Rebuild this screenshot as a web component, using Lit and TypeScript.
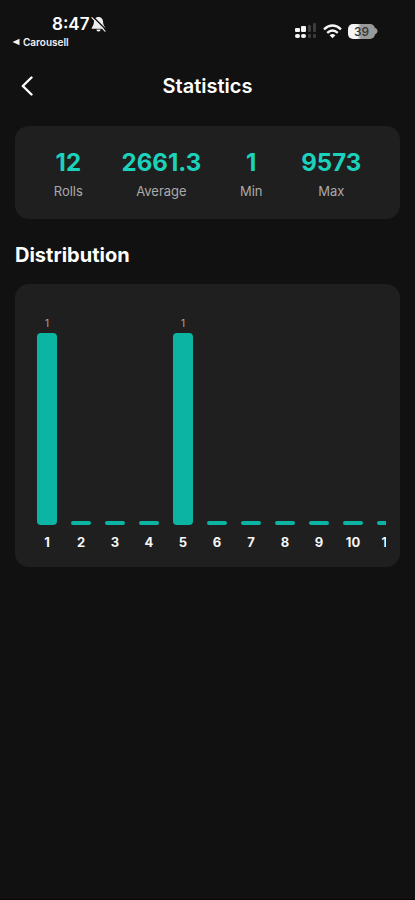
import { LitElement, html, css } from "lit";
import { customElement, property } from "lit/decorators.js";

@customElement("status-bar")
class StatusBar extends LitElement {
  static styles = css`
    :host { display: flex; justify-content: space-between; height: 60px; color: #fff; }
    .left { display: flex; flex-direction: column; padding: 14px 0 0 12px; }
    .clock { display: flex; align-items: center; gap: 2px; margin-left: 40px; font-size: 17px; line-height: 20px; font-weight: 600; }
    .back-app { display: flex; align-items: center; gap: 3px; font-size: 10px; line-height: 16px; font-weight: 600; color: #f2f2f2; text-decoration: none; }
    .right { display: flex; align-items: center; gap: 6px; height: 18px; padding: 22px 37px 0 0; }
    svg { display: block; }
    .battery { display: flex; align-items: center; }
    .level { width: 27px; height: 15px; border-radius: 5px; background: linear-gradient(90deg, #f5f5f5 34%, #999 48%); color: #333; font-size: 12px; line-height: 15px; font-weight: 500; text-align: center; }
  `;
  render() {
    return html`
      <div class="left">
        <div class="clock">8:47
          <svg width="15" height="17" viewBox="0 0 15 17" aria-label="Silent">
            <path d="M7.5 1C4.2 1 2.9 3.6 2.9 6.4C2.9 9.6 0.6 10.6 0.6 12.8H14.4C14.4 10.6 12.1 9.6 12.1 6.4C12.1 3.6 10.8 1 7.5 1ZM5.4 13.6C5.6 15 6.5 15.6 7.5 15.6C8.5 15.6 9.4 15 9.6 13.6Z" fill="#eee"/>
            <path d="M2 0.8L15 13.8" stroke="#111" stroke-width="1.4"/>
            <path d="M0.9 1.7L14 15.2" stroke="#eee" stroke-width="1.2" stroke-linecap="round"/>
          </svg>
        </div>
        <a class="back-app" href="#carousell">
          <svg width="8" height="8" viewBox="0 0 8 8"><path d="M0.5 4L7.5 0.8V7.2Z" fill="#f2f2f2"/></svg>Carousell
        </a>
      </div>
      <div class="right">
        <svg width="22" height="16" viewBox="0 0 22 16" aria-label="Signal">
          <g fill="#f5f5f5">
            <rect x="0" y="5" width="5" height="4" rx="1"/><rect x="6" y="3" width="5" height="6" rx="1"/>
            <rect x="0" y="11" width="5" height="4" rx="2"/><rect x="6" y="11" width="5" height="4" rx="2"/>
          </g>
          <g fill="#3c3c3c">
            <rect x="13" y="2" width="3" height="7" rx="1"/><rect x="18" y="0" width="3" height="9" rx="1"/>
            <rect x="13" y="11" width="3" height="4" rx="1"/><rect x="18" y="11" width="3" height="4" rx="1"/>
          </g>
        </svg>
        <svg width="19" height="15" viewBox="0 0 19 15" aria-label="Wi-Fi">
          <g fill="none" stroke="#f5f5f5" stroke-width="2.4">
            <path d="M1 5.4Q9.5 -2.2 18 5.4"/><path d="M4.2 8.8Q9.5 4 14.8 8.8"/>
          </g>
          <path d="M6.6 11.2Q9.5 8.8 12.4 11.2L9.5 14.3Z" fill="#f5f5f5"/>
        </svg>
        <div class="battery">
          <div class="level">39</div>
          <svg width="3" height="8" viewBox="0 0 3 8"><path d="M0 0.5Q2.6 2 2.6 4T0 7.5Z" fill="#999"/></svg>
        </div>
      </div>`;
  }
}

@customElement("stats-summary")
class StatsSummary extends LitElement {
  @property({ attribute: false }) stats: [string, string][] = [];
  static styles = css`
    dl { display: flex; justify-content: space-evenly; margin: 0; padding: 21px 0 19px; border-radius: 14px; background: #1f1f1f; }
    .stat { display: flex; flex-direction: column-reverse; gap: 4px; align-items: center; }
    dt { font-size: 13px; line-height: 17px; color: #aaa; }
    dd { margin: 0; font-size: 24px; line-height: 32px; font-weight: 700; color: #1bd3bd; }
  `;
  render() {
    return html`<dl>${this.stats.map(([label, value]) => html`
      <div class="stat"><dt>${label}</dt><dd>${value}</dd></div>`)}</dl>`;
  }
}

@customElement("distribution-chart")
class DistributionChart extends LitElement {
  @property({ attribute: false }) counts: number[] = [];
  static styles = css`
    :host { display: block; padding: 32px 14px 16px 15px; border-radius: 14px; background: #1f1f1f; }
    .scroller { display: flex; overflow: hidden; }
    .column { flex: none; width: 34px; display: flex; flex-direction: column; align-items: center; }
    .plot { height: 209px; display: flex; flex-direction: column; justify-content: flex-end; align-items: center; }
    .count { font-size: 10px; line-height: 14px; margin-bottom: 3px; color: #aaa; }
    .bar { width: 20px; min-height: 4px; border-radius: 4px; background: #0bb4a3; }
    .bar.empty { border-radius: 2px; }
    .face { margin-top: 8px; font-size: 13px; line-height: 18px; font-weight: 700; color: #f5f5f5; }
  `;
  render() {
    const max = Math.max(...this.counts, 1);
    return html`<div class="scroller">${this.counts.map((n, i) => html`
      <div class="column">
        <div class="plot">
          ${n ? html`<span class="count">${n}</span>` : ""}
          <div class="bar ${n ? "" : "empty"}" style="height:${Math.round((n / max) * 192)}px"></div>
        </div>
        <span class="face">${i + 1}</span>
      </div>`)}</div>`;
  }
}

@customElement("app-root")
class AppRoot extends LitElement {
  static styles = css`
    :host { display: block; box-sizing: border-box; min-height: 100vh; background: #111; border-bottom: 1px solid #080808; color: #fff; font-family: Inter, "Liberation Sans", sans-serif; }
    header { display: grid; grid-template-columns: 24px 1fr 24px; align-items: center; height: 52px; padding: 0 15px; }
    .back { display: flex; justify-content: center; padding: 0; border: 0; background: none; color: #fff; }
    h1 { margin: 0; font-size: 20px; line-height: 24px; font-weight: 600; text-align: center; }
    main { padding: 14px 15px; }
    h2 { margin: 23px 0 15px; font-size: 20px; line-height: 27px; font-weight: 700; }
  `;
  render() {
    return html`
      <status-bar></status-bar>
      <header>
        <button class="back" aria-label="Back">
          <svg width="14" height="20" viewBox="0 0 14 20"><path d="M11.5 1.5L2.8 10L11.5 18.5" fill="none" stroke="currentColor" stroke-width="2.4" stroke-linecap="round" stroke-linejoin="round"/></svg>
        </button>
        <h1>Statistics</h1>
      </header>
      <main>
        <stats-summary .stats=${[["Rolls", "12"], ["Average", "2661.3"], ["Min", "1"], ["Max", "9573"]]}></stats-summary>
        <h2>Distribution</h2>
        <distribution-chart .counts=${[1, 0, 0, 0, 1, 0, 0, 0, 0, 0, 0]}></distribution-chart>
      </main>`;
  }
}
